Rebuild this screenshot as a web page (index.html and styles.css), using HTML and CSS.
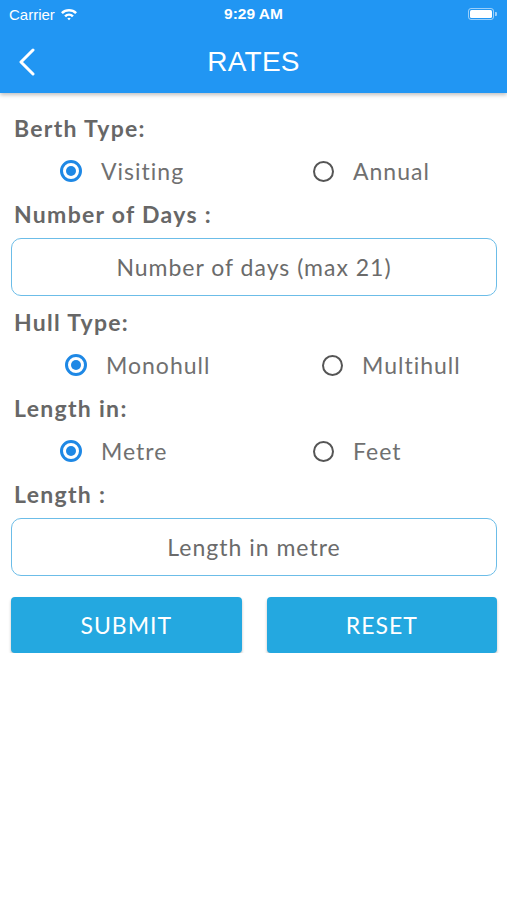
FILE: index.html
```html
<!DOCTYPE html>
<html lang="en">
<head>
    <meta charset="UTF-8">
    <meta name="viewport" content="width=device-width, initial-scale=1.0">
    <title>Rates</title>
    <link rel="stylesheet" href="styles.css">
</head>
<body>
    <header class="app-header">
        <div class="status-bar">
            <div class="carrier">
                Carrier
                <svg class="wifi" width="18" height="14" viewBox="0 0 18 14">
                    <path d="M1 5.2 A11.5 11.5 0 0 1 17 5.2 L15.2 7 A9 9 0 0 0 2.8 7 Z" fill="#fff"/>
                    <path d="M4.2 8.4 A7 7 0 0 1 13.8 8.4 L12 10.2 A4.5 4.5 0 0 0 6 10.2 Z" fill="#fff"/>
                    <path d="M7.3 11.5 A2.4 2.4 0 0 1 10.7 11.5 L9 13.2 Z" fill="#fff"/>
                </svg>
            </div>
            <div class="clock">9:29 AM</div>
            <div class="battery">
                <span class="battery-body"><span class="battery-level"></span></span>
                <span class="battery-cap"></span>
            </div>
        </div>
        <nav class="nav-bar">
            <div class="back">
                <svg width="20" height="30" viewBox="0 0 20 30">
                    <polyline points="14,3 2,15 14,27" fill="none" stroke="#fff" stroke-width="3" stroke-linecap="round" stroke-linejoin="round"/>
                </svg>
            </div>
            <h1 class="title">RATES</h1>
            <div></div>
        </nav>
    </header>

    <form class="rates-form" id="ratesForm">
        <div class="field-label">Berth Type:</div>
        <div class="radio-row">
            <label class="option"><input type="radio" name="berth" value="visiting" checked><span class="dot"></span>Visiting</label>
            <label class="option"><input type="radio" name="berth" value="annual"><span class="dot"></span>Annual</label>
        </div>

        <div class="field-label">Number of Days :</div>
        <input class="text-input" type="number" name="days" min="1" max="21" placeholder="Number of days (max 21)">

        <div class="field-label">Hull Type:</div>
        <div class="radio-row hull-row">
            <label class="option"><input type="radio" name="hull" value="mono" checked><span class="dot"></span>Monohull</label>
            <label class="option"><input type="radio" name="hull" value="multi"><span class="dot"></span>Multihull</label>
        </div>

        <div class="field-label">Length in:</div>
        <div class="radio-row">
            <label class="option"><input type="radio" name="unit" value="metre" checked><span class="dot"></span>Metre</label>
            <label class="option"><input type="radio" name="unit" value="feet"><span class="dot"></span>Feet</label>
        </div>

        <div class="field-label">Length :</div>
        <input class="text-input" type="number" name="length" placeholder="Length in metre">

        <div class="buttons">
            <button type="submit" class="btn">SUBMIT</button>
            <button type="reset" class="btn">RESET</button>
        </div>
    </form>
</body>
</html>
```

FILE: styles.css
```css
body {
    margin: 0;
    background-color: #fff;
    font-family: Lato, "Open Sans", sans-serif;
    color: #6b6b6b;
}

.app-header {
    background-color: #2196f3;
    color: #fff;
    box-shadow: 0 2px 4px rgba(0, 0, 0, 0.25);
    font-family: "Liberation Sans", Arial, sans-serif;
}

.status-bar {
    height: 28px;
    display: grid;
    grid-template-columns: 1fr auto 1fr;
    align-items: center;
    padding: 0 9px;
    font-size: 15px;
}

.carrier {
    display: flex;
    align-items: center;
    gap: 5px;
}

.clock {
    font-weight: bold;
    font-size: 15.5px;
}

.battery {
    justify-self: end;
    display: flex;
    align-items: center;
    margin-right: 1px;
}

.battery-body {
    width: 22px;
    height: 8px;
    border: 1.5px solid rgba(255, 255, 255, 0.55);
    border-radius: 3px;
    padding: 1px;
    display: flex;
}

.battery-level {
    flex: 1;
    background-color: #fff;
    border-radius: 1.5px;
}

.battery-cap {
    width: 2px;
    height: 4px;
    background-color: rgba(255, 255, 255, 0.55);
    border-radius: 0 1px 1px 0;
    margin-left: 1px;
}

.nav-bar {
    height: 65px;
    display: grid;
    grid-template-columns: 1fr auto 1fr;
    align-items: center;
}

.back {
    padding-left: 19px;
    padding-top: 2px;
    display: flex;
}

.title {
    margin: 0;
    font-size: 28px;
    font-weight: normal;
    letter-spacing: 0.2px;
    padding-top: 3px;
}

.rates-form {
    padding: 20px 10px 0 11px;
}

.field-label {
    height: 30px;
    line-height: 30px;
    padding-left: 3px;
    font-size: 23px;
    letter-spacing: 1.3px;
    font-weight: bold;
    color: #676767;
}

.radio-row {
    height: 56px;
    display: grid;
    grid-template-columns: 253px auto;
    align-items: center;
    padding-left: 49px;
}

.hull-row {
    grid-template-columns: 257px auto;
    padding-left: 54px;
}

.option {
    display: flex;
    align-items: center;
    font-size: 23px;
    letter-spacing: 1px;
    color: #707070;
    cursor: pointer;
}

.option input {
    display: none;
}

.dot {
    width: 17px;
    height: 17px;
    border: 2.5px solid #555;
    border-radius: 50%;
    margin-right: 19px;
    box-sizing: content-box;
    position: relative;
}

.option input:checked + .dot {
    border: 3px solid #1e88e5;
    width: 16px;
    height: 16px;
}

.option input:checked + .dot::after {
    content: "";
    position: absolute;
    top: 3px;
    left: 3px;
    width: 10px;
    height: 10px;
    border-radius: 50%;
    background-color: #1e88e5;
}

.text-input {
    display: block;
    box-sizing: border-box;
    width: 100%;
    height: 58px;
    margin: 9px 0 11px;
    border: 1.5px solid #6cbde8;
    border-radius: 10px;
    text-align: center;
    font-family: inherit;
    font-size: 23px;
    letter-spacing: 1px;
    color: #555;
    outline: none;
}

.text-input::placeholder {
    color: #6b6b6b;
}

.text-input::-webkit-inner-spin-button {
    display: none;
}

.buttons {
    display: flex;
    gap: 25px;
    margin-top: 21px;
}

.btn {
    flex: 1;
    height: 56px;
    background-color: #24a8e0;
    color: #fff;
    border: none;
    border-radius: 4px;
    font-family: inherit;
    font-size: 23px;
    letter-spacing: 1px;
    box-shadow: 0 2px 3px rgba(0, 0, 0, 0.25);
    cursor: pointer;
}
```
